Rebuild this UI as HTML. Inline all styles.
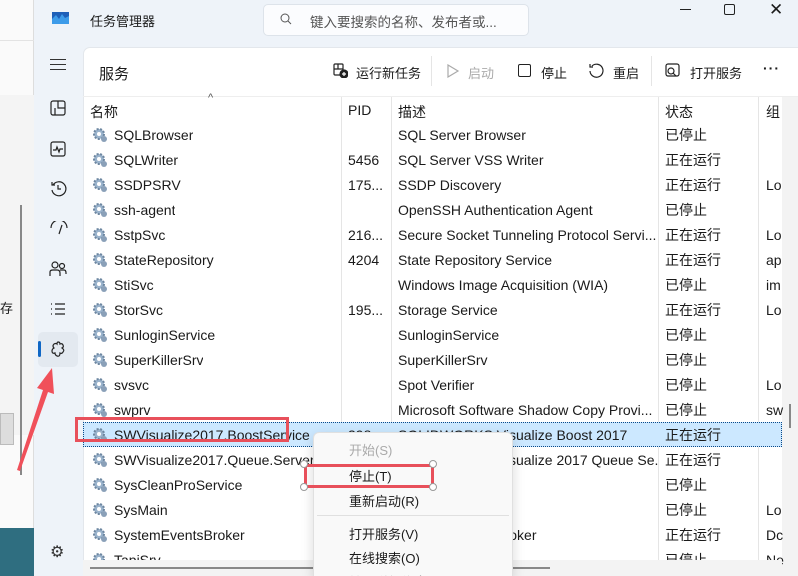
<!DOCTYPE html><html><head><meta charset="utf-8"><style>
*{margin:0;padding:0;box-sizing:border-box}
html,body{width:798px;height:576px;overflow:hidden}
body{position:relative;background:#eef3f9;font-family:"Liberation Sans","Noto Sans CJK SC",sans-serif;font-size:14px;color:#1a1a1a}
.abs{position:absolute}
.leftwin{left:0;top:0;width:34px;height:576px;background:#fafafa;border-right:1px solid #ddd}
.row{position:absolute;left:83px;width:700px;height:25px;line-height:27px}
.row span{position:absolute;white-space:nowrap;overflow:hidden}
.c1{left:31px}.c2{left:265px;width:40px}.c3{left:315px;width:260px}.c4{left:582px}.c5{left:683px;width:20px}
.gear{position:absolute;left:9px;top:5px;width:16px;height:16px}
.vl{position:absolute;top:97px;height:463px;width:1px;background:#e5e5e5}
.mi{position:absolute;left:349px;font-size:13px}
</style></head><body>
<div class="abs leftwin"></div>
<div class="abs" style="left:0;top:40px;width:34px;height:1px;background:#e3e3e3"></div>
<div class="abs" style="left:0;top:95px;width:34px;height:340px;background:#f4f4f4"></div>
<div class="abs" style="left:20px;top:205px;width:2px;height:270px;background:#888"></div>
<div class="abs" style="left:0;top:413px;width:14px;height:32px;background:#ddd;border:1px solid #bbb"></div>
<div class="abs" style="left:0;top:298px;font-size:13px">存</div>
<div class="abs" style="left:0;top:528px;width:34px;height:48px;background:#2f6e80"></div>
<svg class="abs" style="left:52px;top:12px" width="17" height="12"><rect width="17" height="12" fill="#3d9be9"/><path d="M0 7 L4 3 L7 7 L10 2 L13 6 L17 4 L17 0 L0 0Z" fill="#1e5fb8"/></svg>
<div class="abs" style="left:90px;top:11px;font-size:13px">任务管理器</div>
<div class="abs" style="left:263px;top:4px;width:266px;height:32px;background:#fbfcfe;border:1px solid #dde3ea;border-radius:5px"></div>
<svg class="abs" style="left:280px;top:13px" width="12" height="12"><circle cx="5" cy="5" r="4" fill="none" stroke="#555" stroke-width="1"/><path d="M8 8 L11 11" stroke="#555"/></svg>
<div class="abs" style="left:310px;top:11px;font-size:13.5px;color:#555">键入要搜索的名称、发布者或...</div>
<div class="abs" style="left:680px;top:9px;width:11px;height:1px;background:#222"></div>
<div class="abs" style="left:724px;top:4px;width:11px;height:11px;border:1px solid #222;border-radius:2px"></div>
<div class="abs" style="left:769px;top:0px;font-size:17px">✕</div>
<div class="abs" style="left:50px;top:64px;width:16px;height:1px;background:#333;box-shadow:0 -5px 0 #333,0 5px 0 #333"></div>
<svg class="abs" style="left:50px;top:100px" width="16" height="16" fill="none" stroke="#222" stroke-width="1.2"><rect x="1" y="1" width="14" height="14" rx="2"/><path d="M8 1V8H15M5 8V15"/></svg>
<svg class="abs" style="left:50px;top:141px" width="16" height="16" fill="none" stroke="#222" stroke-width="1.2"><rect x="1" y="1" width="14" height="14" rx="2"/><path d="M3 9H6L7 6L9 11L10 8H13"/></svg>
<svg class="abs" style="left:50px;top:180px" width="17" height="17" fill="none" stroke="#222" stroke-width="1.2"><path d="M3 5A7 7 0 1 1 2 10M2 2V5H5M8 5V9H11"/></svg>
<svg class="abs" style="left:50px;top:221px" width="18" height="14" fill="none" stroke="#222" stroke-width="1.2"><path d="M1 7A8 8 0 0 1 17 7M9 13L12 4"/></svg>
<svg class="abs" style="left:49px;top:260px" width="18" height="17" fill="none" stroke="#222" stroke-width="1.2"><circle cx="6" cy="5" r="3"/><circle cx="13" cy="6" r="2.5"/><path d="M1 16V12Q1 10 4 10H8Q11 10 11 13V16M11 10H15Q17 10 17 13V14"/></svg>
<svg class="abs" style="left:50px;top:302px" width="16" height="14" stroke="#222" stroke-width="1.3"><path d="M1 2H2M5 2H15M1 7H2M5 7H15M1 12H2M5 12H15"/></svg>
<div class="abs" style="left:38px;top:332px;width:40px;height:35px;background:#e3e9f0;border-radius:5px"></div>
<div class="abs" style="left:38px;top:341px;width:3px;height:16px;background:#1067c5;border-radius:2px"></div>
<svg class="abs" style="left:50px;top:341px" width="17" height="17" fill="none" stroke="#222" stroke-width="1.2"><path d="M8 1Q10 1 10 3Q12 2 13 4Q14 6 12 7Q15 9 13 11Q12 13 10 12Q10 16 7 15Q5 14 5 12Q2 13 2 10Q2 8 4 7Q2 5 4 3Q6 2 7 3Q7 1 8 1Z"/></svg>
<div class="abs" style="left:50px;top:542px;font-size:16px;color:#333">⚙</div>
<div class="abs" style="left:83px;top:47px;width:715px;height:529px;background:#fff;border:1px solid #e3e7ec;border-right:none;border-bottom:none;border-radius:7px 0 0 0"></div>
<div class="abs" style="left:99px;top:63px;font-size:15px">服务</div>
<svg class="abs" style="left:333px;top:63px" width="15" height="15" fill="none" stroke="#222" stroke-width="1.2"><rect x="1" y="1" width="9" height="11" rx="1"/><path d="M1 6H10M5 1V6"/><circle cx="11" cy="11" r="4" fill="#222"/><path d="M11 9V13M9 11H13" stroke="#fff"/></svg>
<div class="abs" style="left:356px;top:63px;font-size:13px">运行新任务</div>
<div class="abs" style="left:431px;top:56px;width:1px;height:30px;background:#e5e5e5"></div>
<svg class="abs" style="left:446px;top:64px" width="14" height="14" fill="none" stroke="#aaa" stroke-width="1.2"><path d="M2 1L12 7L2 13Z"/></svg>
<div class="abs" style="left:468px;top:63px;font-size:13px;color:#aaa">启动</div>
<div class="abs" style="left:518px;top:64px;width:13px;height:13px;border:1.3px solid #222;border-radius:2px"></div>
<div class="abs" style="left:541px;top:63px;font-size:13px">停止</div>
<svg class="abs" style="left:588px;top:62px" width="17" height="17" fill="none" stroke="#222" stroke-width="1.2"><path d="M4 4A6.5 6.5 0 1 1 2 9M2 2V5H5"/></svg>
<div class="abs" style="left:613px;top:63px;font-size:13px">重启</div>
<div class="abs" style="left:651px;top:56px;width:1px;height:30px;background:#e5e5e5"></div>
<svg class="abs" style="left:665px;top:63px" width="16" height="16" fill="none" stroke="#222" stroke-width="1.2"><rect x="1" y="1" width="13" height="12" rx="2"/><circle cx="6" cy="8" r="3"/><path d="M8 10L11 13"/></svg>
<div class="abs" style="left:690px;top:63px;font-size:13px">打开服务</div>
<div class="abs" style="left:763px;top:60px;font-size:14px;letter-spacing:1px;font-weight:bold">···</div>
<div class="abs" style="left:83px;top:96px;width:715px;height:1px;background:#eee"></div>
<div class="abs" style="left:90px;top:102px">名称</div>
<div class="abs" style="left:208px;top:92px;font-size:11px;color:#555">^</div>
<div class="abs" style="left:348px;top:102px">PID</div>
<div class="abs" style="left:398px;top:102px">描述</div>
<div class="abs" style="left:665px;top:102px">状态</div>
<div class="abs" style="left:766px;top:102px">组</div>
<div class="vl" style="left:341px"></div><div class="vl" style="left:391px"></div><div class="vl" style="left:658px"></div><div class="vl" style="left:758px"></div>
<div class="abs" style="left:782px;top:97px;width:16px;height:479px;background:#f3f3f3"></div>
<div class="abs" style="left:789px;top:404px;width:2px;height:24px;background:#888"></div>
<div class="abs" style="left:83px;top:422px;width:699px;height:25px;background:#cce8ff;border:1px dotted #0a4a8a"></div>
<div id="rows"></div>
<script>
var d=[["SQLBrowser","","SQL Server Browser","已停止",""],["SQLWriter","5456","SQL Server VSS Writer","正在运行",""],["SSDPSRV","175...","SSDP Discovery","正在运行","Lo"],["ssh-agent","","OpenSSH Authentication Agent","已停止",""],["SstpSvc","216...","Secure Socket Tunneling Protocol Servi...","正在运行","Lo"],["StateRepository","4204","State Repository Service","正在运行","ap"],["StiSvc","","Windows Image Acquisition (WIA)","已停止","im"],["StorSvc","195...","Storage Service","正在运行","Lo"],["SunloginService","","SunloginService","已停止",""],["SuperKillerSrv","","SuperKillerSrv","已停止",""],["svsvc","","Spot Verifier","已停止","Lo"],["swprv","","Microsoft Software Shadow Copy Provi...","已停止","sw"],["SWVisualize2017.BoostService","398","SOLIDWORKS Visualize Boost 2017","正在运行",""],["SWVisualize2017.Queue.Server","","SOLIDWORKS Visualize 2017 Queue Se...","正在运行",""],["SysCleanProService","","","已停止",""],["SysMain","","","已停止","Lo"],["SystemEventsBroker","","System Events Broker","正在运行","Dc"],["TapiSrv","","","已停止","Ne"]];
var g='<svg class="gear" viewBox="0 0 16 16"><circle cx="7" cy="7" r="5" fill="#9ab3cc" stroke="#6d86a0" stroke-width="2" stroke-dasharray="2 1.5"/><circle cx="7" cy="7" r="2" fill="#fff"/><circle cx="12" cy="12" r="3" fill="#8aa0b8"/></svg>';
var h='';d.forEach(function(r,i){h+='<div class="row" style="top:'+(122+i*25)+'px">'+g+'<span class="c1">'+r[0]+'</span><span class="c2">'+r[1]+'</span><span class="c3">'+r[2]+'</span><span class="c4">'+r[3]+'</span><span class="c5">'+r[4]+'</span></div>'});
document.getElementById('rows').innerHTML=h;
</script>
<div class="abs" style="left:83px;top:560px;width:699px;height:16px;background:#f3f3f3"></div>
<div class="abs" style="left:90px;top:567px;width:460px;height:2px;background:#888"></div>
<div class="abs" style="left:313px;top:432px;width:200px;height:144px;background:#f9f9f9;border:1px solid #e0e0e0;border-bottom:none;border-radius:6px 6px 0 0;box-shadow:0 4px 12px rgba(0,0,0,.15)"></div>
<div class="mi" style="top:440px;color:#aaa">开始(S)</div>
<div class="mi" style="top:466px">停止(T)</div>
<div class="mi" style="top:491px">重新启动(R)</div>
<div class="abs" style="left:317px;top:515px;width:192px;height:1px;background:#e0e0e0"></div>
<div class="mi" style="top:524px">打开服务(V)</div>
<div class="mi" style="top:548px">在线搜索(O)</div>
<div class="mi" style="top:572px">转到详细信息</div>
<div class="abs" style="left:75px;top:417px;width:214px;height:25px;border:3px solid #e8505b"></div>
<div class="abs" style="left:304px;top:464px;width:130px;height:24px;border:3px solid #e8505b"></div>
<div class="abs" style="left:300px;top:460px;width:8px;height:8px;border:1px solid #999;border-radius:50%;background:#fff"></div>
<div class="abs" style="left:429px;top:460px;width:8px;height:8px;border:1px solid #999;border-radius:50%;background:#fff"></div>
<div class="abs" style="left:300px;top:483px;width:8px;height:8px;border:1px solid #999;border-radius:50%;background:#fff"></div>
<div class="abs" style="left:429px;top:483px;width:8px;height:8px;border:1px solid #999;border-radius:50%;background:#fff"></div>
<svg class="abs" style="left:10px;top:360px" width="50" height="115"><path d="M7 110 L33 30 L27 28 L42 8 L44 34 L38 32 L10 111Z" fill="#f0505a"/></svg>
</body></html>
